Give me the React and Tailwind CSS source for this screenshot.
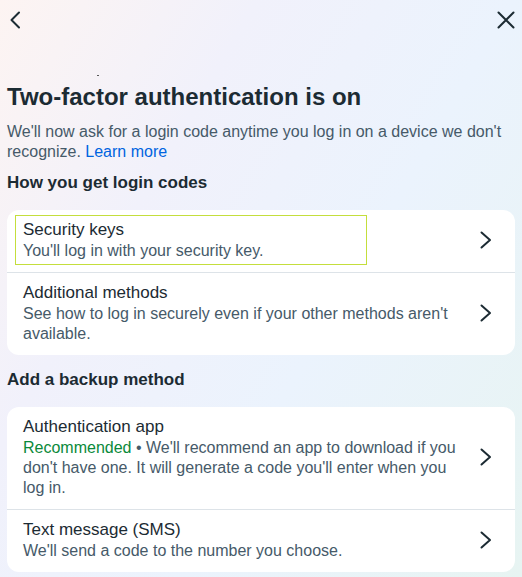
import React from "react";

function Chevron() {
  return (
    <svg width="24" height="24" viewBox="0 0 24 24" className="shrink-0 ml-[12px]" fill="none">
      <path d="M7.5 4.5 L16 12 L7.5 19.5" stroke="#1c2b33" strokeWidth="2" strokeLinecap="round" strokeLinejoin="round" />
    </svg>
  );
}

function Row({ title, children, highlight }) {
  return (
    <div className="relative flex items-center pl-[16px] pr-[17px] pt-[9px] pb-[11px]">
      {highlight && (
        <div className="absolute left-[8px] top-[5px] w-[352px] h-[50px] border border-[#c4de3c] pointer-events-none" />
      )}
      <div className="flex-1 min-w-0">
        <div className="text-[17px] leading-[22px] text-[#1c2b33]">{title}</div>
        <div className="text-[16px] leading-[20px] text-[#465a69]">{children}</div>
      </div>
      <Chevron />
    </div>
  );
}

export default function App() {
  return (
    <div
      className="w-full min-h-[577px] bg-[linear-gradient(120deg,#fdf4f2_0%,#f1f1fb_30%,#ebf3fd_60%,#e7f4f2_100%)] text-[#1c2b33]"
      style={{ fontFamily: '"Liberation Sans", Arial, sans-serif' }}
    >
      <div className="h-[40px] flex items-center justify-between pl-[9px] pr-[7px]">
        <svg width="12" height="18" viewBox="0 0 12 18" fill="none">
          <path d="M10 1.5 L2.5 9 L10 16.5" stroke="#1c2b33" strokeWidth="2" strokeLinecap="round" strokeLinejoin="round" />
        </svg>
        <svg width="18" height="18" viewBox="0 0 18 18" fill="none">
          <path d="M1.5 1.5 L16.5 16.5 M16.5 1.5 L1.5 16.5" stroke="#1c2b33" strokeWidth="2" strokeLinecap="round" />
        </svg>
      </div>
      <div className="h-[41px] pt-[35px] pl-[97px]">
        <div className="w-[2px] h-[1px] bg-[#5a5a5a]" />
      </div>
      <div className="px-[7px]">
        <h1 className="text-[24px] leading-[32px] font-bold text-[#1c2b33]">Two-factor authentication is on</h1>
        <p className="mt-[9px] text-[16px] leading-[20px] text-[#465a69]">
          We'll now ask for a login code anytime you log in on a device we don't recognize.{" "}
          <span className="text-[#0064e0]">Learn more</span>
        </p>
        <h2 className="mt-[9px] text-[17px] leading-[24px] font-bold text-[#1c2b33]">How you get login codes</h2>
        <div className="mt-[15px] bg-white rounded-[12px] overflow-hidden">
          <Row title="Security keys" highlight>
            You'll log in with your security key.
          </Row>
          <div className="h-px bg-[#dde3e8]" />
          <Row title="Additional methods">
            See how to log in securely even if your other methods aren't available.
          </Row>
        </div>
        <h2 className="mt-[13px] text-[17px] leading-[24px] font-bold text-[#1c2b33]">Add a backup method</h2>
        <div className="mt-[15px] bg-white rounded-[12px] overflow-hidden">
          <Row title="Authentication app">
            <span className="text-[#0a8a3a]">Recommended</span> • We'll recommend an app to download if you don't have one. It will generate a code you'll enter when you log in.
          </Row>
          <div className="h-px bg-[#dde3e8]" />
          <Row title="Text message (SMS)">We'll send a code to the number you choose.</Row>
        </div>
      </div>
    </div>
  );
}
